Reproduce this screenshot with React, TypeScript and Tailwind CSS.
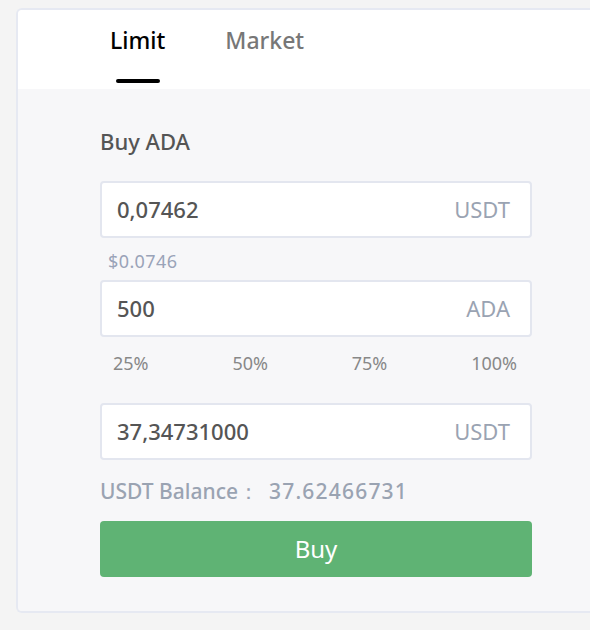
import React, { useState } from 'react';

const font = { fontFamily: '"Noto Sans", "Open Sans", sans-serif' };

function AmountField({ value, unit }: { value: string; unit: string }) {
  return (
    <div className="flex h-[57px] items-center justify-between rounded-[4px] border-2 border-[#e3e6ef] bg-white pl-[15px] pr-[20px]">
      <span className="text-[22px] font-medium text-[#555]">{value}</span>
      <span className="text-[22px] text-[#9aa3b2]">{unit}</span>
    </div>
  );
}

export default function App() {
  const [tab, setTab] = useState<'limit' | 'market'>('limit');

  return (
    <div className="h-[630px] w-[590px] overflow-hidden bg-[#f4f4f4] pt-2 pl-4" style={font}>
      <div className="w-[600px] overflow-hidden rounded-l-[6px] border-2 border-r-0 border-[#e6e9f2]">
        {/* Tabs */}
        <div className="flex h-[79px] items-start gap-[60px] bg-white pl-[92px]">
          {(['limit', 'market'] as const).map((t) => (
            <button
              key={t}
              onClick={() => setTab(t)}
              className={`relative pt-[14px] text-[23px] font-medium leading-[32px] ${tab === t ? 'text-black' : 'text-[#777]'}`}
            >
              {t === 'limit' ? 'Limit' : 'Market'}
              {tab === t && (
                <span className="absolute left-1/2 top-[69px] h-[4px] w-[44px] -translate-x-1/2 rounded-full bg-black" />
              )}
            </button>
          ))}
        </div>

        {/* Form */}
        <div className="bg-[#f7f7f9] pt-[38px] pb-[34px] pl-[82px]">
          <div className="w-[432px]">
            <div className="text-[22px] font-medium leading-[28px] text-[#555]">Buy ADA</div>

            <div className="mt-[26px]">
              <AmountField value="0,07462" unit="USDT" />
            </div>
            <div className="mt-[12px] pl-2 text-[18px] leading-[22px] tracking-[0.4px] text-[#9aa3b8]">$0.0746</div>

            <div className="mt-[8px]">
              <AmountField value="500" unit="ADA" />
            </div>

            <div className="mt-[14px] flex justify-between pl-[13px] pr-[15px] text-[18px] leading-[24px] text-[#888]">
              <span>25%</span>
              <span>50%</span>
              <span>75%</span>
              <span>100%</span>
            </div>

            <div className="mt-[28px]">
              <AmountField value="37,34731000" unit="USDT" />
            </div>

            <div className="mt-[17px] flex text-[21px] font-medium leading-[28px] text-[#9aa3b2]">
              <span>USDT Balance：</span>
              <span className="ml-[10px] tracking-[1.2px]">37.62466731</span>
            </div>

            <button className="mt-[16px] flex h-[56px] w-[432px] items-center justify-center rounded-[4px] bg-[#5fb374] text-[24px] text-white">
              Buy
            </button>
          </div>
        </div>
      </div>
    </div>
  );
}
